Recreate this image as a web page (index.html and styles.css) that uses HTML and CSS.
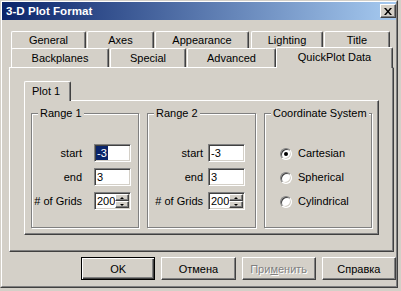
FILE: index.html
```html
<!DOCTYPE html>
<html>
<head>
<meta charset="utf-8">
<link rel="stylesheet" href="styles.css">
</head>
<body>
<div class="window">
  <div class="frame">
    <div class="titlebar">
      <span class="title">3-D Plot Format</span>
      <span class="close"><svg width="8" height="7" viewBox="0 0 8 7"><path d="M0 0h2l2 2.4L6 0h2L5 3.5 8 7H6L4 4.6 2 7H0l3-3.5z" fill="#000"/></svg></span>
    </div>
    <div class="content">
      <div class="tabctl">
        <div class="tabrow row1">
          <div class="tab w-general">General</div>
          <div class="tab w-axes">Axes</div>
          <div class="tab w-appearance">Appearance</div>
          <div class="tab w-lighting">Lighting</div>
          <div class="tab w-title">Title</div>
        </div>
        <div class="tabrow row2">
          <div class="tab w-backplanes">Backplanes</div>
          <div class="tab w-special">Special</div>
          <div class="tab w-advanced">Advanced</div>
          <div class="tab selected w-quick">QuickPlot Data</div>
        </div>
        <div class="panel">
          <div class="subtabs"><div class="subtab">Plot 1</div></div>
          <div class="subpanel">
            <fieldset class="group range1">
              <legend>Range 1</legend>
              <div class="fields">
                <label>start</label><div class="edit"><span class="hl">-3</span></div>
                <label>end</label><div class="edit">3</div>
                <label># of Grids</label><div class="edit spin">200<span class="spinbtns"><span class="sb"><i class="up"></i></span><span class="sb"><i class="down"></i></span></span></div>
              </div>
            </fieldset>
            <fieldset class="group range2">
              <legend>Range 2</legend>
              <div class="fields">
                <label>start</label><div class="edit">-3</div>
                <label>end</label><div class="edit">3</div>
                <label># of Grids</label><div class="edit spin">200<span class="spinbtns"><span class="sb"><i class="up"></i></span><span class="sb"><i class="down"></i></span></span></div>
              </div>
            </fieldset>
            <fieldset class="group coords">
              <legend>Coordinate System</legend>
              <div class="radios">
                <div class="ropt"><span class="radio checked"></span>Cartesian</div>
                <div class="ropt"><span class="radio"></span>Spherical</div>
                <div class="ropt"><span class="radio"></span>Cylindrical</div>
              </div>
            </fieldset>
          </div>
        </div>
      </div>
      <div class="buttons">
        <div class="btn default">OK</div>
        <div class="btn">Отмена</div>
        <div class="btn disabled">При<u>м</u>енить</div>
        <div class="btn">Справка</div>
      </div>
    </div>
  </div>
</div>
</body>
</html>
```
FILE: styles.css
```css
html, body {
  margin: 0;
  padding: 0;
  background: #d4d0c8;
}
body {
  font-family: "Liberation Sans", Arial, sans-serif;
  font-size: 11px;
  color: #000;
}
.window {
  width: 398px;
  height: 288px;
  box-sizing: border-box;
  border: 1px solid;
  border-color: #d4d0c8 #404040 #404040 #d4d0c8;
  background: #d4d0c8;
}
.frame {
  height: 100%;
  box-sizing: border-box;
  border: 1px solid;
  border-color: #fff #808080 #808080 #fff;
}
.titlebar {
  height: 18px;
  display: flex;
  align-items: center;
  padding-left: 4px;
  background: linear-gradient(to right, #0a246a, #a6caf0);
}
.title {
  flex: 1;
  color: #fff;
  font-weight: bold;
  font-size: 11.6px;
  line-height: 18px;
}
.close {
  width: 16px;
  height: 14px;
  box-sizing: border-box;
  border: 1px solid;
  border-color: #fff #404040 #404040 #fff;
  box-shadow: inset -1px -1px 0 #808080;
  background: #d4d0c8;
  display: flex;
  align-items: center;
  justify-content: center;
}
.content {
  padding: 11px 0 0 7px;
}
.tabctl {
  width: 385px;
}
.tabrow {
  display: flex;
  padding-left: 2px;
}
.row1 { height: 18px; }
.row2 { height: 19px; margin-top: -1px; }
.tab {
  box-sizing: border-box;
  height: 100%;
  border-top: 1px solid #fff;
  border-left: 1px solid #fff;
  border-right: 1px solid #404040;
  box-shadow: inset -1px 0 0 #808080;
  border-radius: 2px 2px 0 0;
  background: #d4d0c8;
  text-align: center;
  margin-right: 1px;
  line-height: 17px;
}
.row2 .tab { line-height: 19px; }
.w-general { width: 75px; }
.w-axes { width: 67px; }
.w-appearance { width: 94px; margin-right: 2px; }
.w-lighting { width: 72px; }
.w-title { width: 66px; }
.w-backplanes { width: 98px; }
.w-special { width: 76px; }
.w-advanced { width: 89px; margin-right: 0; }
.tab.selected {
  width: 117px;
  height: 21px;
  margin-top: -1px;
  margin-bottom: -1px;
  position: relative;
  z-index: 1;
  line-height: 19px;
}
.panel {
  height: 185px;
  box-sizing: border-box;
  border: 1px solid;
  border-color: #fff #404040 #404040 #fff;
  box-shadow: inset -1px -1px 0 #808080;
  padding: 13px 0 0 14px;
}
.subtabs {
  display: flex;
  height: 19px;
}
.subtab {
  width: 47px;
  height: 20px;
  box-sizing: border-box;
  border-top: 1px solid #fff;
  border-left: 1px solid #fff;
  border-right: 1px solid #404040;
  box-shadow: inset -1px 0 0 #808080;
  border-radius: 2px 2px 0 0;
  background: #d4d0c8;
  position: relative;
  z-index: 1;
  padding-left: 7px;
  line-height: 18px;
}
.subpanel {
  width: 355px;
  height: 135px;
  box-sizing: border-box;
  border: 1px solid;
  border-color: #fff #404040 #404040 #fff;
  box-shadow: inset -1px -1px 0 #808080;
  padding: 6px 0 0 6px;
  display: flex;
  gap: 8px;
}
.group {
  margin: 0;
  padding: 0;
  min-inline-size: 0;
  height: 121px;
  box-sizing: border-box;
  border: 1px solid #808080;
  box-shadow: inset 1px 1px 0 #fff, 1px 1px 0 #fff;
}
.range1 { width: 108px; }
.range2 { width: 109px; }
.coords { width: 108px; }
.group legend {
  margin-left: 6px;
  padding: 0 2px;
  line-height: 13px;
  background: #d4d0c8;
}
.fields {
  display: grid;
  grid-template-rows: 18px 18px 18px;
  row-gap: 6px;
  margin-top: 24px;
}
.range1 .fields {
  grid-template-columns: 50px 37px;
  column-gap: 12px;
}
.range2 .fields {
  grid-template-columns: 55px 37px;
  column-gap: 5px;
}
.fields label {
  text-align: right;
  line-height: 18px;
}
.edit {
  box-sizing: border-box;
  height: 18px;
  border: 1px solid;
  border-color: #808080 #fff #fff #808080;
  box-shadow: inset 1px 1px 0 #404040, inset -1px -1px 0 #d4d0c8;
  background: #fff;
  padding-left: 2px;
  line-height: 16px;
  display: flex;
  align-items: center;
}
.hl {
  background: #0a246a;
  color: #fff;
  margin-left: -1px;
  padding: 0 1px;
  line-height: 14px;
}
.spinbtns {
  margin-left: auto;
  margin-right: 1px;
  width: 15px;
  height: 14px;
  display: flex;
  flex-direction: column;
}
.sb {
  flex: 1;
  box-sizing: border-box;
  border: 1px solid;
  border-color: #fff #404040 #404040 #fff;
  box-shadow: inset -1px -1px 0 #808080;
  background: #d4d0c8;
  display: flex;
  align-items: center;
  justify-content: center;
}
.up {
  width: 0;
  height: 0;
  border-left: 2px solid transparent;
  border-right: 2px solid transparent;
  border-bottom: 2px solid #000;
}
.down {
  width: 0;
  height: 0;
  border-left: 2px solid transparent;
  border-right: 2px solid transparent;
  border-top: 2px solid #000;
}
.radios {
  margin-top: 27px;
  padding-left: 15px;
  display: flex;
  flex-direction: column;
  gap: 11px;
}
.ropt {
  display: flex;
  align-items: center;
  height: 13px;
  line-height: 13px;
}
.radio {
  width: 12px;
  height: 12px;
  box-sizing: border-box;
  border: 1px solid;
  border-color: #808080 #fff #fff #808080;
  border-radius: 50%;
  background: #fff;
  box-shadow: inset 1px 1px 0 #404040, inset -1px -1px 0 #d4d0c8;
  margin-right: 6px;
  display: flex;
  align-items: center;
  justify-content: center;
}
.radio.checked::after {
  content: "";
  width: 4px;
  height: 4px;
  border-radius: 50%;
  background: #000;
}
.buttons {
  display: flex;
  gap: 6px;
  margin-top: 5px;
  padding-left: 72px;
}
.btn {
  width: 75px;
  height: 23px;
  box-sizing: border-box;
  border: 1px solid;
  border-color: #fff #404040 #404040 #fff;
  box-shadow: inset -1px -1px 0 #808080;
  display: flex;
  align-items: center;
  justify-content: center;
}
.btn.default {
  border: 1px solid #000;
  box-shadow: inset 1px 1px 0 #fff, inset -1px -1px 0 #404040, inset -2px -2px 0 #808080;
}
.btn.disabled {
  color: #808080;
  text-shadow: 1px 1px 0 #fff;
}
```
